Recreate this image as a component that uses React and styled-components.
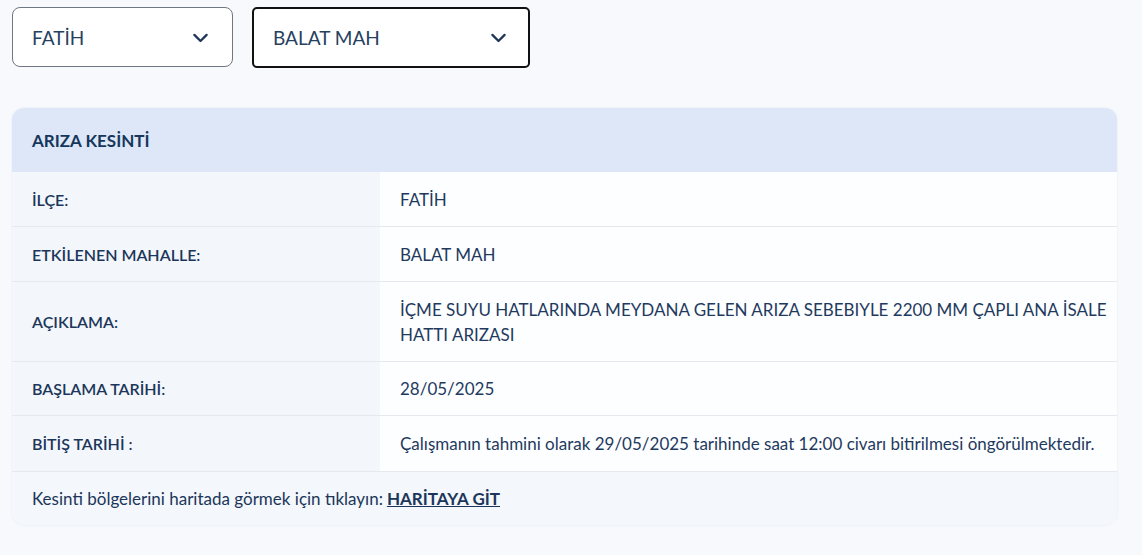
import React from 'react';
import styled, { createGlobalStyle } from 'styled-components';

const GlobalStyle = createGlobalStyle`
  html, body {
    margin: 0;
    padding: 0;
    background: #f7f9fc;
    font-family: Lato, "Open Sans", sans-serif;
    color: #1c3557;
  }
`;

const Page = styled.div`
  padding: 7px 25px 30px 12px;
  display: flex;
  flex-direction: column;
  gap: 40px;
`;

const Filters = styled.div`
  display: flex;
  gap: 19px;
`;

const Select = styled.div`
  box-sizing: border-box;
  width: ${p => p.width}px;
  height: ${p => (p.focused ? 61 : 60)}px;
  display: flex;
  align-items: center;
  justify-content: space-between;
  padding: 0 ${p => (p.focused ? 19 : 21)}px 0 19px;
  background: #ffffff;
  border: ${p => (p.focused ? '2px solid #111' : '1px solid #6f7782')};
  border-radius: ${p => (p.focused ? 5 : 8)}px;
  font-size: 19px;
  color: #26405f;
`;

const Card = styled.div`
  border-radius: 12px;
  overflow: hidden;
  background: #f4f7fb;
  box-shadow: 0 0 2px rgba(200, 212, 230, 0.4);
`;

const CardHead = styled.div`
  height: 64px;
  display: flex;
  align-items: center;
  padding-left: 20px;
  background: #dde7f7;
  font-weight: 700;
  font-size: 17px;
  color: #16365c;
`;

const Row = styled.div`
  box-sizing: border-box;
  display: grid;
  grid-template-columns: 368px 1fr;
  min-height: ${p => p.h}px;
  border-bottom: 1px solid #e4e9f0;
`;

const Label = styled.div`
  display: flex;
  align-items: center;
  padding-left: 20px;
  background: #f3f6fa;
  font-weight: 600;
  font-size: 16px;
  color: #1b365a;
`;

const Value = styled.div`
  display: flex;
  align-items: center;
  padding: 0 8px 0 20px;
  background: #fdfeff;
  font-size: 17px;
  line-height: 25px;
  color: #1f3a5e;
`;

const Footer = styled.div`
  height: 53px;
  display: flex;
  align-items: center;
  padding-left: 20px;
  font-size: 17px;
  color: #1b365a;
`;

const MapLink = styled.a`
  font-weight: 700;
  color: #1b365a;
  text-decoration: underline;
  margin-left: 4px;
`;

const Chevron = () => (
  <svg width="21" height="21" viewBox="0 0 24 24" fill="none" stroke="#1d3557" strokeWidth="2.6" strokeLinecap="round" strokeLinejoin="round">
    <path d="M5 9l7 7 7-7" />
  </svg>
);

const rows = [
  { label: 'İLÇE:', value: 'FATİH', h: 55 },
  { label: 'ETKİLENEN MAHALLE:', value: 'BALAT MAH', h: 55 },
  { label: 'AÇIKLAMA:', value: 'İÇME SUYU HATLARINDA MEYDANA GELEN ARIZA SEBEBIYLE 2200 MM ÇAPLI ANA İSALE HATTI ARIZASI', h: 80 },
  { label: 'BAŞLAMA TARİHİ:', value: '28/05/2025', h: 54 },
  { label: 'BİTİŞ TARİHİ :', value: 'Çalışmanın tahmini olarak 29/05/2025 tarihinde saat 12:00 civarı bitirilmesi öngörülmektedir.', h: 56 },
];

export default function App() {
  return (
    <>
      <GlobalStyle />
      <Page>
        <Filters>
          <Select width={221}>
            FATİH
            <Chevron />
          </Select>
          <Select width={278} focused>
            BALAT MAH
            <Chevron />
          </Select>
        </Filters>
        <Card>
          <CardHead>ARIZA KESİNTİ</CardHead>
          {rows.map(r => (
            <Row key={r.label} h={r.h}>
              <Label>{r.label}</Label>
              <Value>{r.value}</Value>
            </Row>
          ))}
          <Footer>
            Kesinti bölgelerini haritada görmek için tıklayın:
            <MapLink href="#">HARİTAYA GİT</MapLink>
          </Footer>
        </Card>
      </Page>
    </>
  );
}
